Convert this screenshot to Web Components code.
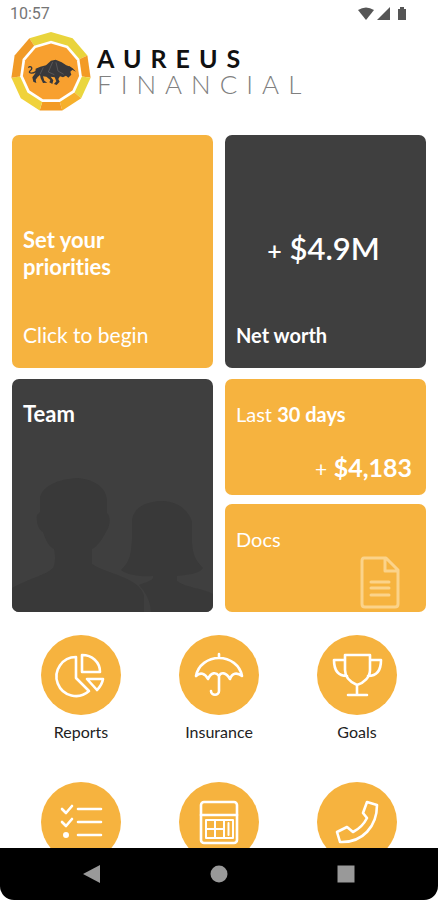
<!DOCTYPE html>
<html lang="en">
<head>
<meta charset="utf-8">
<meta name="viewport" content="width=device-width, initial-scale=1">
<title>Aureus Financial</title>
<style>
  html, body { margin: 0; height: 100%; background: #fff; }
  body { font-family: Lato, "Open Sans", sans-serif; font-variant-ligatures: none; }
</style>
</head>
<body>
<aureus-app></aureus-app>

<script>
const define = (name, html) => {
  const template = document.createElement('template');
  template.innerHTML = html;
  customElements.define(name, class extends HTMLElement {
    constructor() {
      super();
      this.attachShadow({ mode: 'open' }).append(template.content.cloneNode(true));
    }
  });
};

define('status-bar', `
  <style>
    :host { display: flex; justify-content: space-between; align-items: center; height: 28px; padding: 0 30px 0 10px; color: #757575; font: 16px/28px Roboto, sans-serif; }
    svg { display: block; width: 50px; height: 16px; fill: #555; }
  </style>
  <time>10:57</time>
  <svg viewBox="0 0 50 16" aria-hidden="true">
    <path d="M0 4Q8-1 16 4L8 14Z"/><path d="M32 1V14H19Z"/><path d="M40 3h2V1h4v2h2v11h-8z"/>
  </svg>`);

define('brand-logo', `
  <style>
    :host { display: flex; align-items: center; gap: 6px; height: 84px; padding: 4px 11px 0; box-sizing: border-box; }
    svg { display: block; width: 80px; height: 80px; flex: none; }
    .words { display: flex; flex-direction: column; gap: 2px; padding-bottom: 2px; line-height: 24px; white-space: nowrap; color: #111; }
    b { font-weight: 700; font-size: 25px; letter-spacing: 9px; }
    span { font-weight: 300; font-size: 26px; letter-spacing: 9px; color: #808080; }
  </style>
  <svg viewBox="0 0 80 80" role="img" aria-label="Bull badge">
    <path fill="#e9d43c" d="M40 40 18.4 6.3 40 0 61.6 6.3 76.4 23.4Z"/>
    <path fill="#f39b25" d="M40 40 76.4 23.4 79.6 45.7Z"/>
    <path fill="#ead63e" d="M40 40 79.6 45.7 70.2 66.2Z"/>
    <path fill="#f6b02c" d="M40 40 70.2 66.2 51.3 78.4Z"/>
    <path fill="#f39b25" d="M40 40 51.3 78.4 28.7 78.4Z"/>
    <path fill="#f0d23b" d="M40 40 28.7 78.4 9.8 66.2 .4 45.7Z"/>
    <path fill="#f19a27" d="M40 40 .4 45.7 3.6 23.4 18.4 6.3Z"/>
    <path fill="#fff" transform="translate(8.8 8.8) scale(.78)" d="M40 0 61.6 6.3 76.4 23.4 79.6 45.7 70.2 66.2 51.3 78.4 28.7 78.4 9.8 66.2 .4 45.7 3.6 23.4 18.4 6.3Z"/>
    <path fill="#f8a02f" transform="translate(11.6 11.6) scale(.71)" d="M40 0 61.6 6.3 76.4 23.4 79.6 45.7 70.2 66.2 51.3 78.4 28.7 78.4 9.8 66.2 .4 45.7 3.6 23.4 18.4 6.3Z"/>
    <g transform="translate(-6 -4) scale(.3333)" fill="#38383b">
      <path d="M92 122 106 116 123 112 138 98 152 95 170 103 184 112 196 116 205 123 196 131 199 140 190 149 183 143 174 148 165 145 160 153 164 161 155 171 147 168 154 160 149 148 137 146 145 157 142 168 133 163 136 156 124 146 114 145 118 158 127 164 114 165 107 151 105 141 98 147 92 155 94 165 85 161 82 148 91 136Z"/>
      <path d="M94 130C80 139 66 135 77 127 85 121 77 111 70 119" fill="none" stroke="#38383b" stroke-width="4"/>
      <path d="M183 121 197 123 213 131 206 124 193 115Z"/>
      <path d="M143 102 130 132 148 140M153 103 159 129 176 139M115 118 105 139" fill="none" stroke="#686565" stroke-width="2"/>
    </g>
  </svg>
  <div class="words"><b>AUREUS</b><span>FINANCIAL</span></div>`);

define('tile-card', `
  <style>
    :host { display: block; min-width: 0; --fill: #f6b33f; }
    :host([tone="dark"]) { --fill: #3f3f3f; }
    button { position: relative; display: flex; flex-direction: column; width: 100%; height: 100%; padding: 22px 11px 20px; border: 0; border-radius: 7px; overflow: hidden; background: var(--fill); color: #fff; font: inherit; font-size: 20px; line-height: 26px; text-align: left; cursor: pointer; }
    :host([align="end"]) button { justify-content: flex-end; }
    ::slotted(*) { position: relative; }
  </style>
  <button type="button"><slot name="art"></slot><slot></slot></button>`);

define('quick-action', `
  <style>
    :host { display: block; }
    button { display: flex; flex-direction: column; align-items: center; gap: 6px; width: 100%; padding: 0; border: 0; background: none; color: #222; font: inherit; font-size: 16px; line-height: 22px; cursor: pointer; }
    .disc { display: grid; place-items: center; width: 80px; height: 80px; border-radius: 50%; background: #f6b33f; }
    ::slotted(svg) { width: 80px; height: 80px; fill: none; stroke: #fff; stroke-width: 2.6; stroke-linejoin: round; stroke-linecap: round; }
  </style>
  <button type="button"><span class="disc"><slot name="icon"></slot></span><slot></slot></button>`);

define('nav-bar', `
  <style>
    :host { display: grid; grid-template-columns: repeat(3, 1fr); flex: none; height: 52px; padding: 0 29px; background: #000; border-radius: 0 0 14px 14px; }
    button { display: grid; place-items: center; padding: 0; border: 0; background: none; }
    svg { display: block; width: 18px; height: 18px; fill: #999; }
  </style>
  <button type="button" aria-label="Back"><svg viewBox="0 0 18 18"><path d="M17 0V18L0 9Z"/></svg></button>
  <button type="button" aria-label="Home"><svg viewBox="0 0 18 18"><circle cx="9" cy="9" r="8.5"/></svg></button>
  <button type="button" aria-label="Recent apps"><svg viewBox="0 0 18 18"><path d="M.5 .5h17v17H.5z"/></svg></button>`);

define('aureus-app', `
  <style>
    :host { display: flex; flex-direction: column; height: 100vh; }
    main { flex: 1; min-height: 0; overflow: hidden; }
    .tiles { display: grid; grid-template-columns: 1fr 1fr; grid-template-rows: 233px 233px; gap: 11px 12px; padding: 23px 12px; }
    .stack { display: grid; grid-template-rows: 116px 1fr; gap: 9px; min-width: 0; }
    .title { font-size: 22px; line-height: 27px; font-weight: 700; width: 120px; margin-bottom: 42px; }
    .begin { font-size: 21px; }
    .team { font-size: 22px; }
    .worth { font-size: 31px; line-height: 32px; font-weight: 600; text-align: center; margin-bottom: 56px; padding-right: 4px; }
    .worth small { font-size: 25px; }
    .gain { margin-top: 27px; padding-right: 3px; text-align: right; font-size: 25px; }
    .gain small { font-size: 21px; }
    .people { position: absolute; left: 0; bottom: 0; width: 100%; fill: #393939; }
    .doc { position: absolute; right: 26px; bottom: 3px; width: 40px; height: 53px; fill: none; stroke: #fbd38a; stroke-width: 3; stroke-linejoin: round; stroke-linecap: round; }
    .actions { display: grid; grid-template-columns: repeat(3, 1fr); gap: 39px 0; padding: 0 12px; }
  </style>
  <status-bar></status-bar>
  <main>
    <brand-logo></brand-logo>
    <section class="tiles">
      <tile-card align="end"><span class="title">Set your priorities</span><span class="begin">Click to begin</span></tile-card>
      <tile-card tone="dark" align="end"><span class="worth"><small>+</small> $4.9M</span><b>Net worth</b></tile-card>
      <tile-card tone="dark">
        <svg slot="art" class="people" viewBox="0 0 201 134" aria-hidden="true">
          <path d="M0 134V110C18 100 34 97 41 90 44 84 43 76 42 71 36 68 33 60 31 54 26 51 24 44 25 37L28 34V20C30 8 46 1 66 0 84 2 94 10 95 22V35C99 39 98 47 95 52 91 60 86 68 80 71V86C94 96 128 99 132 118V134Z"/>
          <path d="M139 134C138 118 130 111 127 107 136 103 142 103 141 98 129 99 115 97 109 92 119 83 119 74 120 60V42C122 29 134 24 148 23 164 22 177 32 180 44V65C181 76 183 82 191 90 187 96 174 97 165 98V103C174 110 191 110 201 116V134Z"/>
        </svg>
        <b class="team">Team</b>
      </tile-card>
      <div class="stack">
        <tile-card><span>Last <b>30 days</b></span><span class="gain"><small>+</small> <b>$4,183</b></span></tile-card>
        <tile-card><span>Docs</span>
          <svg slot="art" class="doc" viewBox="0 0 40 53" aria-hidden="true"><path d="M4 2H26L38 14V48Q38 51 35 51H5Q2 51 2 48V5Q2 2 4 2ZM25 3V15H37M11 26H29M11 32H29M11 39H29"/></svg>
        </tile-card>
      </div>
    </section>
    <section class="actions">
      <quick-action><svg slot="icon" viewBox="0 0 80 80"><path d="M35 22A19.5 19.5 0 1 0 48 56L35 43ZM41 20V37H59C59 27 51 20 41 20ZM46 44H62Q61 50 56 55Z"/></svg>Reports</quick-action>
      <quick-action><svg slot="icon" viewBox="0 0 80 80"><path d="M40 19V23M17 41C19 30 29 23 40 23S61 30 63 41C58 37 53 38 51 44 47 37 42 37 40 41 37 37 32 37 29 44 26 38 21 37 17 41ZM40 41V56C40 61 32 61 32 56"/></svg>Insurance</quick-action>
      <quick-action><svg slot="icon" viewBox="0 0 80 80"><path d="M28 20H53V35C53 42 47 48 40 50 33 47 28 42 28 35ZM28 25H17C17 35 21 41 30 41M53 25H64C64 35 60 41 51 41M40 50V60M31 60H50"/></svg>Goals</quick-action>
      <quick-action><svg slot="icon" viewBox="0 0 80 80" role="img" aria-label="Checklist"><path d="M21 27 25 31 31 24M21 40 25 44 31 37M37 27H60M37 40H60M37 53H60"/><circle cx="25" cy="53" r="1.7" fill="#fff"/></svg></quick-action>
      <quick-action><svg slot="icon" viewBox="0 0 80 80" role="img" aria-label="Calculator"><rect x="22" y="20" width="36" height="41" rx="3"/><path d="M22 33H58"/><path stroke-width="2" d="M27 38H54V56H27ZM36 38V56M45 38V56M27 47H45M49.500 41V53"/></svg></quick-action>
      <quick-action><svg slot="icon" viewBox="0 0 80 80" role="img" aria-label="Phone"><path d="M50 20 60 23C60 44 46 61 23 60L20 50 30 45 36 50C42 47 47 42 50 36L46 31Z"/></svg></quick-action>
    </section>
  </main>
  <nav-bar></nav-bar>`);
</script>
</body>
</html>
